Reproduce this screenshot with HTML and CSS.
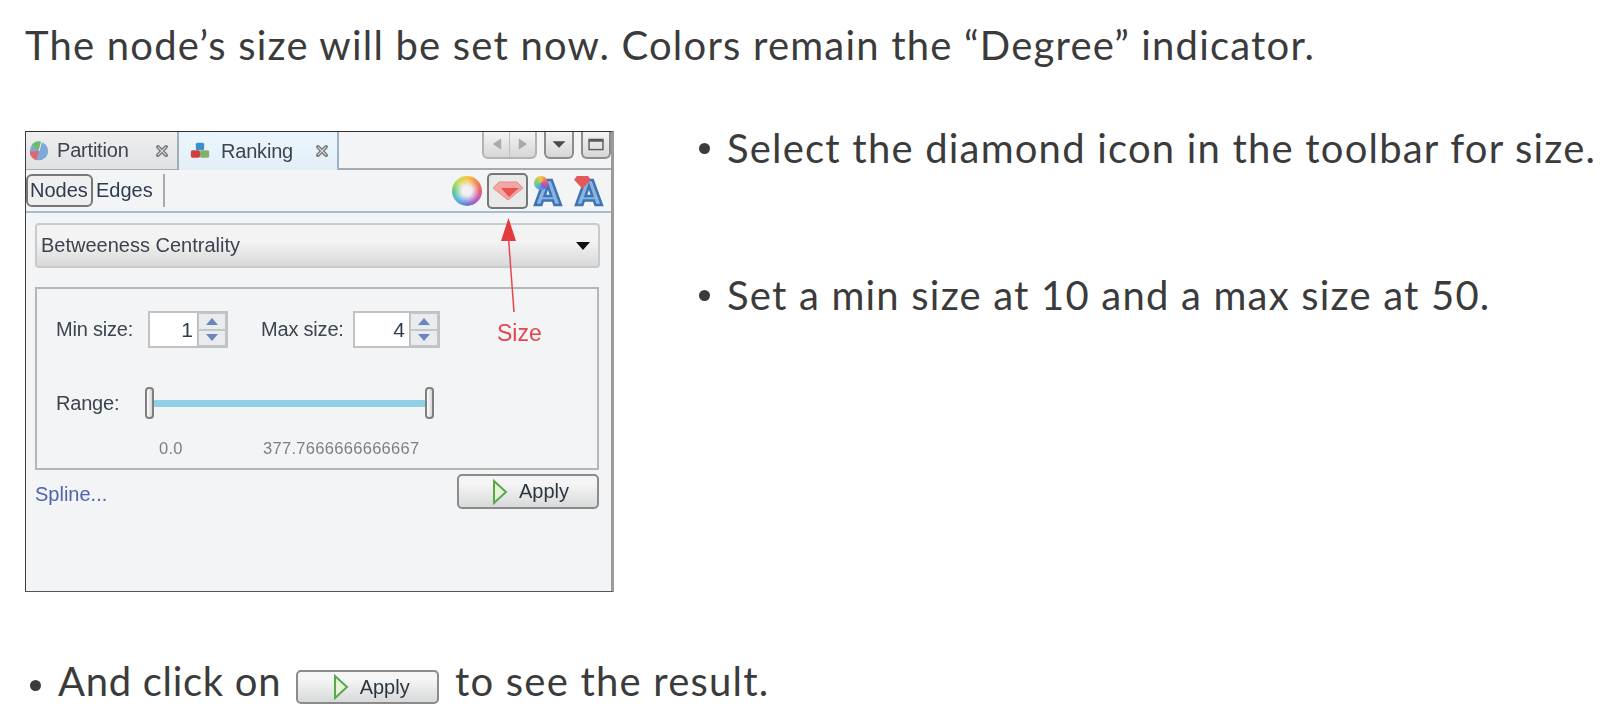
FILE: index.html
```html
<!DOCTYPE html>
<html lang="en">
<head>
<meta charset="utf-8">
<title>Ranking size</title>
<link rel="stylesheet" href="styles.css">
</head>
<body>
<p class="intro">The node’s size will be set now. Colors remain the “Degree” indicator.</p>
<div class="row">
  <div class="panel">
    <div class="tabs">
      <div class="tab tab-off">
        <svg class="tab-ico" viewBox="0 0 24 24"><circle cx="12" cy="12" r="11" fill="#7fa8d8"/><path d="M12 12 3 5A11 11 0 0 1 15 1Z" fill="#6dbb6d"/><path d="M12 12 1 13A11 11 0 0 0 9 23Z" fill="#e2676a"/><path d="M12 12 15 1" stroke="#fff" stroke-width="1"/></svg>
        <span>Partition</span>
        <svg class="tab-x" viewBox="0 0 12 12"><path d="M2.5 2.5 9.5 9.5M9.5 2.5 2.5 9.5" stroke="#777" stroke-width="3.2" stroke-linecap="round"/><path d="M2.5 2.5 9.5 9.5M9.5 2.5 2.5 9.5" stroke="#ddd" stroke-width="1"/></svg>
      </div>
      <div class="tab tab-on">
        <svg class="tab-ico" viewBox="0 0 24 24"><rect x="7" y="2" width="10" height="9" rx="2" fill="#3d8fc9"/><rect x="1" y="11" width="11" height="9" rx="2" fill="#cf4040"/><rect x="12" y="11" width="11" height="9" rx="2" fill="#83b06a"/></svg>
        <span>Ranking</span>
        <svg class="tab-x" viewBox="0 0 12 12"><path d="M2.5 2.5 9.5 9.5M9.5 2.5 2.5 9.5" stroke="#777" stroke-width="3.2" stroke-linecap="round"/><path d="M2.5 2.5 9.5 9.5M9.5 2.5 2.5 9.5" stroke="#ddd" stroke-width="1"/></svg>
      </div>
      <div class="tab-ctrls">
        <div class="ctl ctl-nav">
          <svg class="ctl-half" viewBox="0 0 26 27"><path d="M18 7V19L9 13Z" fill="#a9a9a9"/></svg>
          <svg class="ctl-half" viewBox="0 0 26 27"><path d="M9 7V19L18 13Z" fill="#a9a9a9"/></svg>
        </div>
        <div class="ctl ctl-one"><svg viewBox="0 0 28 27"><path d="M7 10H21L14 17Z" fill="#4a4a4a"/></svg></div>
        <div class="ctl ctl-one"><svg viewBox="0 0 28 27"><rect x="6.500" y="8" width="15" height="11" fill="none" stroke="#5a5a5a" stroke-width="1.500"/><path d="M6 9.500H22" stroke="#5a5a5a" stroke-width="2"/></svg></div>
      </div>
    </div>
    <div class="toolbar">
      <span class="toggle toggle-on">Nodes</span>
      <span class="toggle">Edges</span>
      <span class="sep"></span>
      <span class="wheel"></span>
      <span class="icon-btn">
        <svg viewBox="0 0 32 20"><path d="M7 1H25L31 7 16 19 1 7Z" fill="#f3a5a5" stroke="#ee8a8a" stroke-width="1"/><path d="M9 7H27L17 16Z" fill="#e9534f"/></svg>
      </span>
      <span class="a-ico"><span class="a-glyph">A</span><span class="a-badge a-badge-wheel"></span></span>
      <span class="a-ico"><span class="a-glyph">A</span><svg class="a-badge-gem" viewBox="0 0 18 14"><path d="M3 0H15L18 4 9 14 0 4Z" fill="#e4595c"/></svg></span>
    </div>
    <div class="content">
      <div class="select">
        <span>Betweeness Centrality</span>
        <svg class="select-arrow" viewBox="0 0 14 8"><path d="M0 0H14L7 8Z" fill="#111"/></svg>
      </div>
      <div class="group">
        <div class="spin-row">
          <span class="lbl lbl-min">Min size:</span>
          <span class="spin spin-min"><span class="spin-val">1</span><span class="spin-btns"><span class="spin-btn"><svg viewBox="0 0 12 7"><path d="M6 0 12 7H0Z" fill="#6d86c0"/></svg></span><span class="spin-btn"><svg viewBox="0 0 12 7"><path d="M0 0H12L6 7Z" fill="#6d86c0"/></svg></span></span></span>
          <span class="lbl lbl-max">Max size:</span>
          <span class="spin spin-max"><span class="spin-val">4</span><span class="spin-btns"><span class="spin-btn"><svg viewBox="0 0 12 7"><path d="M6 0 12 7H0Z" fill="#6d86c0"/></svg></span><span class="spin-btn"><svg viewBox="0 0 12 7"><path d="M0 0H12L6 7Z" fill="#6d86c0"/></svg></span></span></span>
        </div>
        <div class="range-row">
          <span class="lbl lbl-range">Range:</span>
          <div class="slider"><span class="thumb"></span><span class="track"></span><span class="thumb"></span></div>
        </div>
        <div class="range-vals"><span class="val-lo">0.0</span><span class="val-hi">377.7666666666667</span></div>
      </div>
      <div class="foot">
        <span class="spline">Spline...</span>
        <span class="apply apply-big">
          <svg class="play" viewBox="0 0 16 26"><path d="M2 2 14 13 2 24Z" fill="#e6f3d8" stroke="#58a84e" stroke-width="2"/></svg>
          <span>Apply</span>
        </span>
      </div>
    </div>
    <svg class="arrow" viewBox="0 0 24 94"><path d="M8.500 0 16 23H1Z" fill="#e23b3b"/><path d="M8.500 20 14 94" stroke="#e8474c" stroke-width="1.500" fill="none"/></svg>
    <span class="size-label">Size</span>
  </div>
  <ul class="steps">
    <li class="step step-one"><span class="dot"></span>Select the diamond icon in the toolbar for size.</li>
    <li class="step step-two"><span class="dot"></span>Set a min size at 10 and a max size at 50.</li>
  </ul>
</div>
<p class="last"><span class="dot"></span><span class="lead">And click on</span> <span class="apply apply-inline"><svg class="play" viewBox="0 0 16 26"><path d="M2 2 14 13 2 24Z" fill="#e6f3d8" stroke="#58a84e" stroke-width="2"/></svg><span>Apply</span></span> to see the result.</p>
</body>
</html>
```
FILE: styles.css
```css
html, body { margin: 0; padding: 0; background: #fff; height: 706px; overflow: hidden; }
body { font-family: "Lato", "Open Sans", sans-serif; color: #3b3b3b; font-size: 40px; letter-spacing: 1.2px; }
.intro { margin: 0; padding: 21px 0 0 25px; height: 131px; box-sizing: border-box; line-height: 48px; white-space: nowrap; }
.row { display: flex; align-items: flex-start; }
.panel { position: relative; margin-left: 25px; width: 589px; height: 461px; box-sizing: border-box; background: #f3f4f6; border: 1px solid #3c3c3c; border-right: 3px solid #9b9b9b; border-top: 1.5px solid #333; border-bottom: 1.5px solid #555; font-family: "Liberation Sans", Arial, sans-serif; font-size: 20px; letter-spacing: 0; color: #3c4450; filter: blur(0.45px); }
.tabs { display: flex; height: 36px; border-bottom: 2px solid #a4abb2; box-sizing: content-box; }
.tab { display: flex; align-items: center; box-sizing: border-box; height: 37px; letter-spacing: -0.2px; }
.tab-off { width: 153px; background: linear-gradient(#efefef, #dfe1e3); padding-left: 3px; border-right: 2px solid #a4abb2; }
.tab-on { width: 160px; background: linear-gradient(#e9f4fb 30%, #e2eff7 100%, #f0f5f9); padding-left: 11px; border-right: 2px solid #9db3c5; height: 38px; }
.tab-ico { width: 20px; height: 20px; flex: none; }
.tab span { margin-left: 8px; }
.tab-on span { margin-left: 11px; }
.tab-x { width: 14px; height: 14px; margin-left: auto; margin-right: 8px; }
.tab-ctrls { margin-left: auto; display: flex; gap: 7px; margin-right: 0; align-items: flex-start; }
.ctl { display: flex; height: 27px; box-sizing: border-box; border: 2px solid #8c8c8c; border-top: 0; border-radius: 0 0 6px 6px; background: linear-gradient(#f3f3f3, #d7d7d7); }
.ctl-nav { width: 55px; border-color: #b3b3b3; }
.ctl-half { width: 26px; height: 25px; }
.ctl-half + .ctl-half { border-left: 1px solid #c0c0c0; }
.ctl-one { width: 30px; }
.ctl-one svg { width: 26px; height: 25px; }
.toolbar { display: flex; align-items: center; height: 43px; box-sizing: border-box; border-bottom: 2px solid #a9bdcc; padding-left: 0; }
.toggle { display: flex; align-items: center; height: 33px; color: #2f3c4f; padding: 0 3px; }
.toggle-on { box-sizing: border-box; width: 67px; padding: 0 0 0 2px; border: 2px solid #777; border-radius: 6px; background: #efefef; }
.sep { width: 2px; height: 33px; background: #aaa; margin-left: 7px; }
.wheel { width: 30px; height: 30px; margin-left: auto; border-radius: 50%; background: radial-gradient(circle, #f1f0f2 0 22%, transparent 60%), conic-gradient(#f6c83d, #f08a4c, #e85c78, #b25dc7, #6d78d8, #53b4e0, #66c88a, #c3dd57, #f6c83d); }
.icon-btn { display: flex; align-items: center; justify-content: center; width: 41px; height: 36px; margin-left: 5px; box-sizing: border-box; border: 2px solid #777; border-radius: 5px; background: #e9e9e9; }
.icon-btn svg { width: 32px; height: 20px; }
.a-ico { position: relative; width: 30px; height: 30px; margin-left: 5px; display: flex; align-items: flex-end; justify-content: center; }
.a-ico + .a-ico { margin-left: 11px; margin-right: 7px; }
.a-glyph { font: 700 34px/26px "DejaVu Sans", sans-serif; color: #8fb3dc; -webkit-text-stroke: 2.5px #3a75b8; }
.a-badge { position: absolute; }
.a-badge-wheel { left: 1px; top: 0; width: 14px; height: 14px; border-radius: 50%; background: conic-gradient(#f6c83d, #e85c78, #8a5dc7, #53b4e0, #8fcf6a, #f6c83d); }
.a-badge-gem { position: absolute; left: 0; top: 0; width: 17px; height: 13px; }
.content { padding: 10px 12px 0 9px; }
.select { display: flex; align-items: center; justify-content: space-between; height: 45px; box-sizing: border-box; width: 565px; padding: 0 8px 0 4px; border: 2px solid #c9cacb; border-radius: 4px; background: linear-gradient(#f3f3f3 40%, #d9d9d9); }
.select-arrow { width: 14px; height: 8px; }
.group { margin-top: 19px; height: 183px; width: 564px; box-sizing: border-box; border: 2px solid #b3b7ba; padding-top: 22px; }
.spin-row { display: flex; align-items: center; height: 37px; }
.lbl { display: block; letter-spacing: -0.2px; }
.lbl-min { margin-left: 19px; width: 92px; }
.lbl-max { margin-left: 33px; width: 92px; }
.spin { display: flex; height: 37px; box-sizing: border-box; border: 2px solid #c0c2c4; background: #fff; }
.spin-min { width: 80px; }
.spin-max { width: 87px; }
.spin-val { flex: 1; text-align: right; padding-right: 4px; line-height: 33px; color: #2f3c4f; font-size: 21px; }
.spin-btns { width: 28px; display: flex; flex-direction: column; background: #e9ecef; border-left: 1px solid #bbb; }
.spin-btn { flex: 1; display: flex; align-items: center; justify-content: center; border: 1px solid #c4c6c8; }
.spin-btn svg { width: 12px; height: 7px; }
.range-row { display: flex; align-items: center; margin-top: 39px; height: 32px; }
.lbl-range { margin-left: 19px; width: 89px; }
.slider { display: flex; align-items: center; width: 289px; }
.thumb { width: 9px; height: 32px; flex: none; box-sizing: border-box; border: 2px solid #7f7f7f; border-radius: 4px; background: linear-gradient(90deg, #fff, #d5d5d5); }
.track { flex: 1; height: 7px; background: #8fd0e6; }
.range-vals { display: flex; font-size: 16.500px; color: #7d7f82; margin-top: 20px; letter-spacing: 0.300px; }
.val-lo { margin-left: 122px; width: 104px; }
.foot { display: flex; justify-content: space-between; align-items: flex-start; width: 564px; margin-top: 4px; }
.spline { color: #4f62ad; margin-top: 9px; font-size: 20px; }
.apply { display: inline-flex; align-items: center; box-sizing: border-box; border: 2px solid #8b8b8b; border-radius: 5px; background: linear-gradient(#f5f5f5 25%, #d8d9da); font-family: "Liberation Sans", Arial, sans-serif; letter-spacing: 0; color: #2d3640; }
.apply-big { width: 142px; height: 35px; padding-left: 33px; font-size: 20px; gap: 11px; }
.apply-inline { width: 143px; height: 34px; padding-left: 35px; font-size: 20px; gap: 11px; vertical-align: -4px; filter: blur(0.4px); margin: 0 5px 0 3px; }
.lead { letter-spacing: 0.7px; }
.play { width: 16px; height: 26px; flex: none; }
.arrow { position: absolute; left: 474px; top: 86px; width: 24px; height: 94px; }
.size-label { position: absolute; left: 471px; top: 188px; color: #e4464e; font-size: 23px; }
.steps { list-style: none; margin: 0 0 0 85px; padding: 0; }
.step { display: flex; align-items: center; white-space: nowrap; height: 48px; }
.step-one { margin-top: -7px; }
.step-two { margin-top: 99px; }
.dot { flex: none; display: inline-block; width: 11px; height: 11px; border-radius: 50%; background: #3b3b3b; margin-right: 17px; }
.last { margin: 0; padding: 65px 0 0 30px; white-space: nowrap; line-height: 48px; }
.last .dot { margin-right: 17px; vertical-align: 5px; }
```
